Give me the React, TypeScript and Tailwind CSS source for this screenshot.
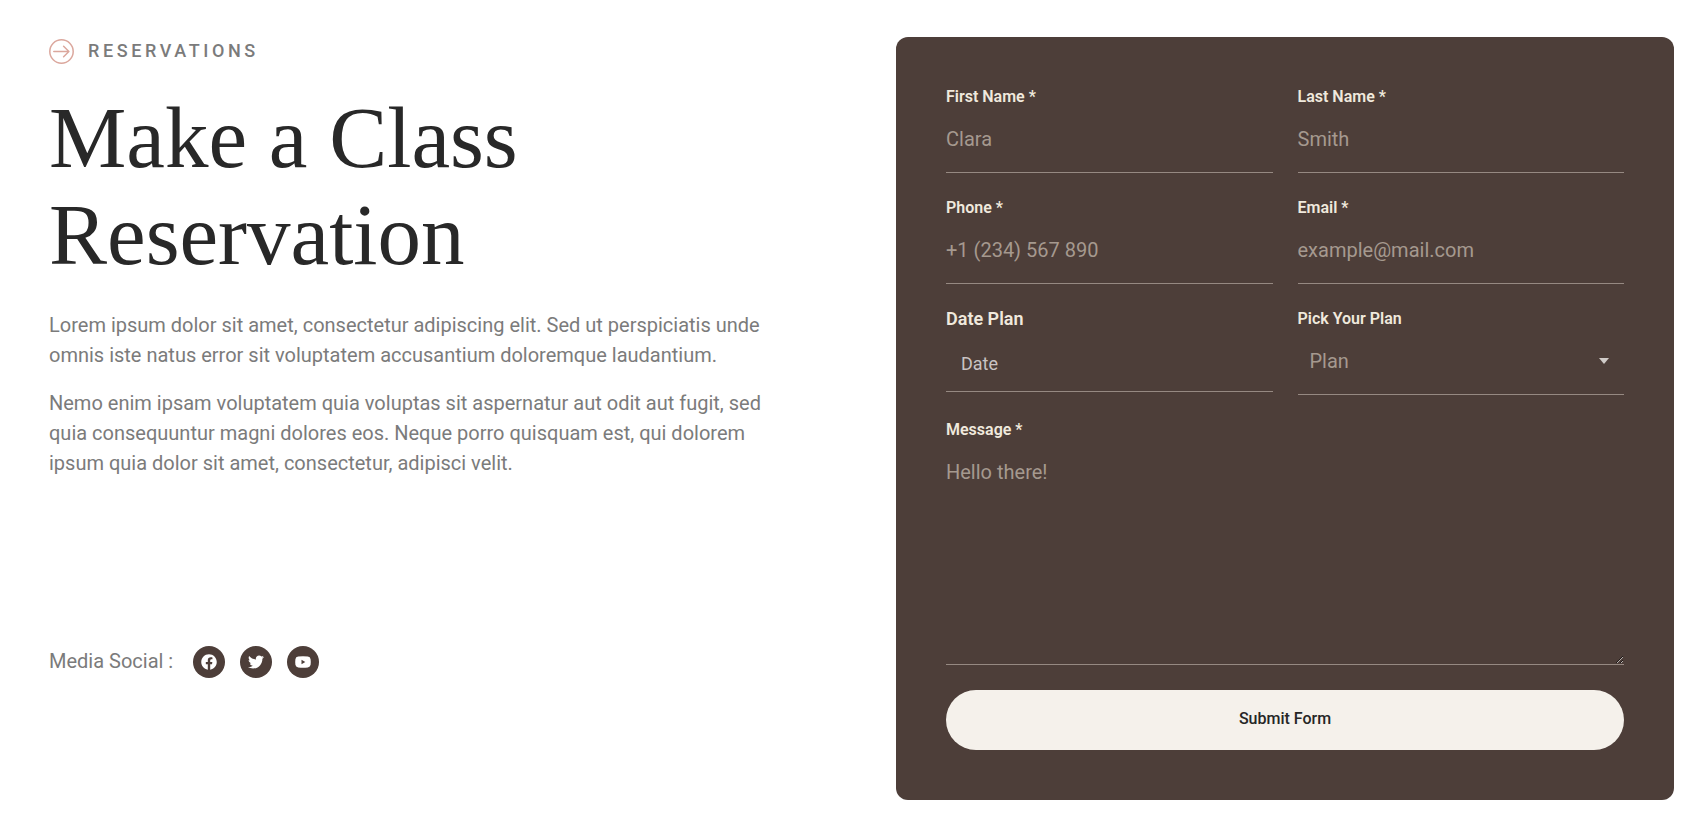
import { FaFacebook, FaTwitter } from "react-icons/fa";

const labelStyle = "block text-base leading-5 font-semibold text-[#f0e9dd]";
const fieldStyle =
  "block w-full bg-transparent border-b border-[#968982] text-xl text-[#f5f1ea] placeholder:text-[#a5998f] placeholder:opacity-100 outline-none";

const textFields = [
  { id: "first-name", label: "First Name *", type: "text", placeholder: "Clara" },
  { id: "last-name", label: "Last Name *", type: "text", placeholder: "Smith" },
  { id: "phone", label: "Phone *", type: "tel", placeholder: "+1 (234) 567 890" },
  { id: "email", label: "Email *", type: "email", placeholder: "example@mail.com" },
];

function YoutubeIcon({ className }: { className?: string }) {
  return (
    <svg viewBox="0 0 16 16" fill="currentColor" fillRule="evenodd" className={className}>
      <path d="M3.2 2.6Q8 2 12.8 2.6Q15.3 2.8 15.6 5.2Q16 8 15.6 10.8Q15.3 13.2 12.8 13.4Q8 14 3.2 13.4Q.7 13.2.4 10.8Q0 8 .4 5.2Q.7 2.8 3.2 2.6ZM6.5 5.8v4.4L10.3 8z" />
    </svg>
  );
}

const socials = [
  { name: "Facebook", icon: FaFacebook },
  { name: "Twitter", icon: FaTwitter },
  { name: "YouTube", icon: YoutubeIcon },
];

function ReservationForm() {
  return (
    <form
      className="grid grid-cols-1 sm:grid-cols-2 gap-[25px] p-[50px] rounded-xl bg-[#4d3e39]"
      onSubmit={(e) => e.preventDefault()}
    >
      {textFields.map((field) => (
        <div key={field.id}>
          <label htmlFor={field.id} className={labelStyle}>
            {field.label}
          </label>
          <input
            id={field.id}
            type={field.type}
            placeholder={field.placeholder}
            className={`${fieldStyle} h-[66px] pb-0.5`}
          />
        </div>
      ))}

      {/* Date */}
      <div>
        <label
          htmlFor="date"
          className="block text-lg leading-5 font-semibold text-[#f0e9dd]"
        >
          Date Plan
        </label>
        <input
          id="date"
          type="text"
          placeholder="Date"
          className="block w-full h-[63px] pt-1.5 px-[15px] bg-transparent border-b border-[#968982] text-lg text-[#f5f1ea] placeholder:text-[#c9c3c3] placeholder:opacity-100 outline-none"
        />
      </div>

      {/* Plan */}
      <div>
        <label htmlFor="plan" className={labelStyle}>
          Pick Your Plan
        </label>
        <div className="relative">
          <select
            id="plan"
            defaultValue="Plan"
            className="block w-full h-[66px] px-3 pb-0.5 appearance-none bg-transparent border-b border-[#968982] text-xl text-[#a5998f] outline-none"
          >
            <option>Plan</option>
            <option>Weekly</option>
            <option>Monthly</option>
          </select>
          <svg
            viewBox="0 0 10 6"
            className="absolute right-[15px] top-[29px] w-2.5 h-1.5 fill-[#d0cbc8] pointer-events-none"
          >
            <path d="M0 0h10L5 6z" />
          </svg>
        </div>
      </div>

      <div className="sm:col-span-2">
        <label htmlFor="message" className={labelStyle}>
          Message *
        </label>
        <textarea
          id="message"
          placeholder="Hello there!"
          className={`${fieldStyle} h-[225px] py-[17px] leading-[30px] resize-y`}
        />
      </div>

      <button
        type="submit"
        className="sm:col-span-2 h-[60px] pb-0.5 rounded-full bg-[#f5f1eb] text-base font-medium text-[#262626]"
      >
        Submit Form
      </button>
    </form>
  );
}

export default function App() {
  return (
    <main className="grid grid-cols-1 lg:grid-cols-2 gap-[69px] pt-[37px] pb-10 pl-[49px] pr-8 bg-white font-[Roboto,sans-serif]">
      <section>
        <div className="flex items-center gap-3.5 h-7">
          <svg
            viewBox="0 0 25 25"
            fill="none"
            stroke="#dba79d"
            strokeWidth="1.5"
            strokeLinecap="round"
            strokeLinejoin="round"
            className="w-[25px] h-[25px]"
          >
            <circle cx="12.5" cy="12.5" r="11.7" />
            <path d="M4.8 12.5h15M14.6 7.3l5.3 5.2-5.3 5.2" />
          </svg>
          <span className="text-lg font-medium tracking-[0.2em] text-[#7b7b7b]">
            RESERVATIONS
          </span>
        </div>

        <h1 className="mt-6 text-[87px] leading-[97px] text-[#282828] font-['Liberation_Serif',serif]">
          Make a Class
          <br />
          Reservation
        </h1>

        <div className="flex flex-col gap-[18px] mt-[27px] lg:pr-12 text-xl leading-[30px] text-[#7b7b7b]">
          <p>
            Lorem ipsum dolor sit amet, consectetur adipiscing elit. Sed ut
            perspiciatis unde omnis iste natus error sit voluptatem accusantium
            doloremque laudantium.
          </p>
          <p>
            Nemo enim ipsam voluptatem quia voluptas sit aspernatur aut odit aut
            fugit, sed quia consequuntur magni dolores eos. Neque porro quisquam
            est, qui dolorem ipsum quia dolor sit amet, consectetur, adipisci
            velit.
          </p>
        </div>

        <div className="flex items-center gap-5 mt-[168px]">
          <span className="pb-0.5 text-xl text-[#7b7b7b]">Media Social :</span>
          <div className="flex gap-[15px]">
            {socials.map(({ name, icon: Icon }) => (
              <a
                key={name}
                href="#"
                aria-label={name}
                className="flex items-center justify-center w-8 h-8 rounded-full bg-[#4d3e39] text-white"
              >
                <Icon className="w-4 h-4" />
              </a>
            ))}
          </div>
        </div>
      </section>

      <ReservationForm />
    </main>
  );
}
